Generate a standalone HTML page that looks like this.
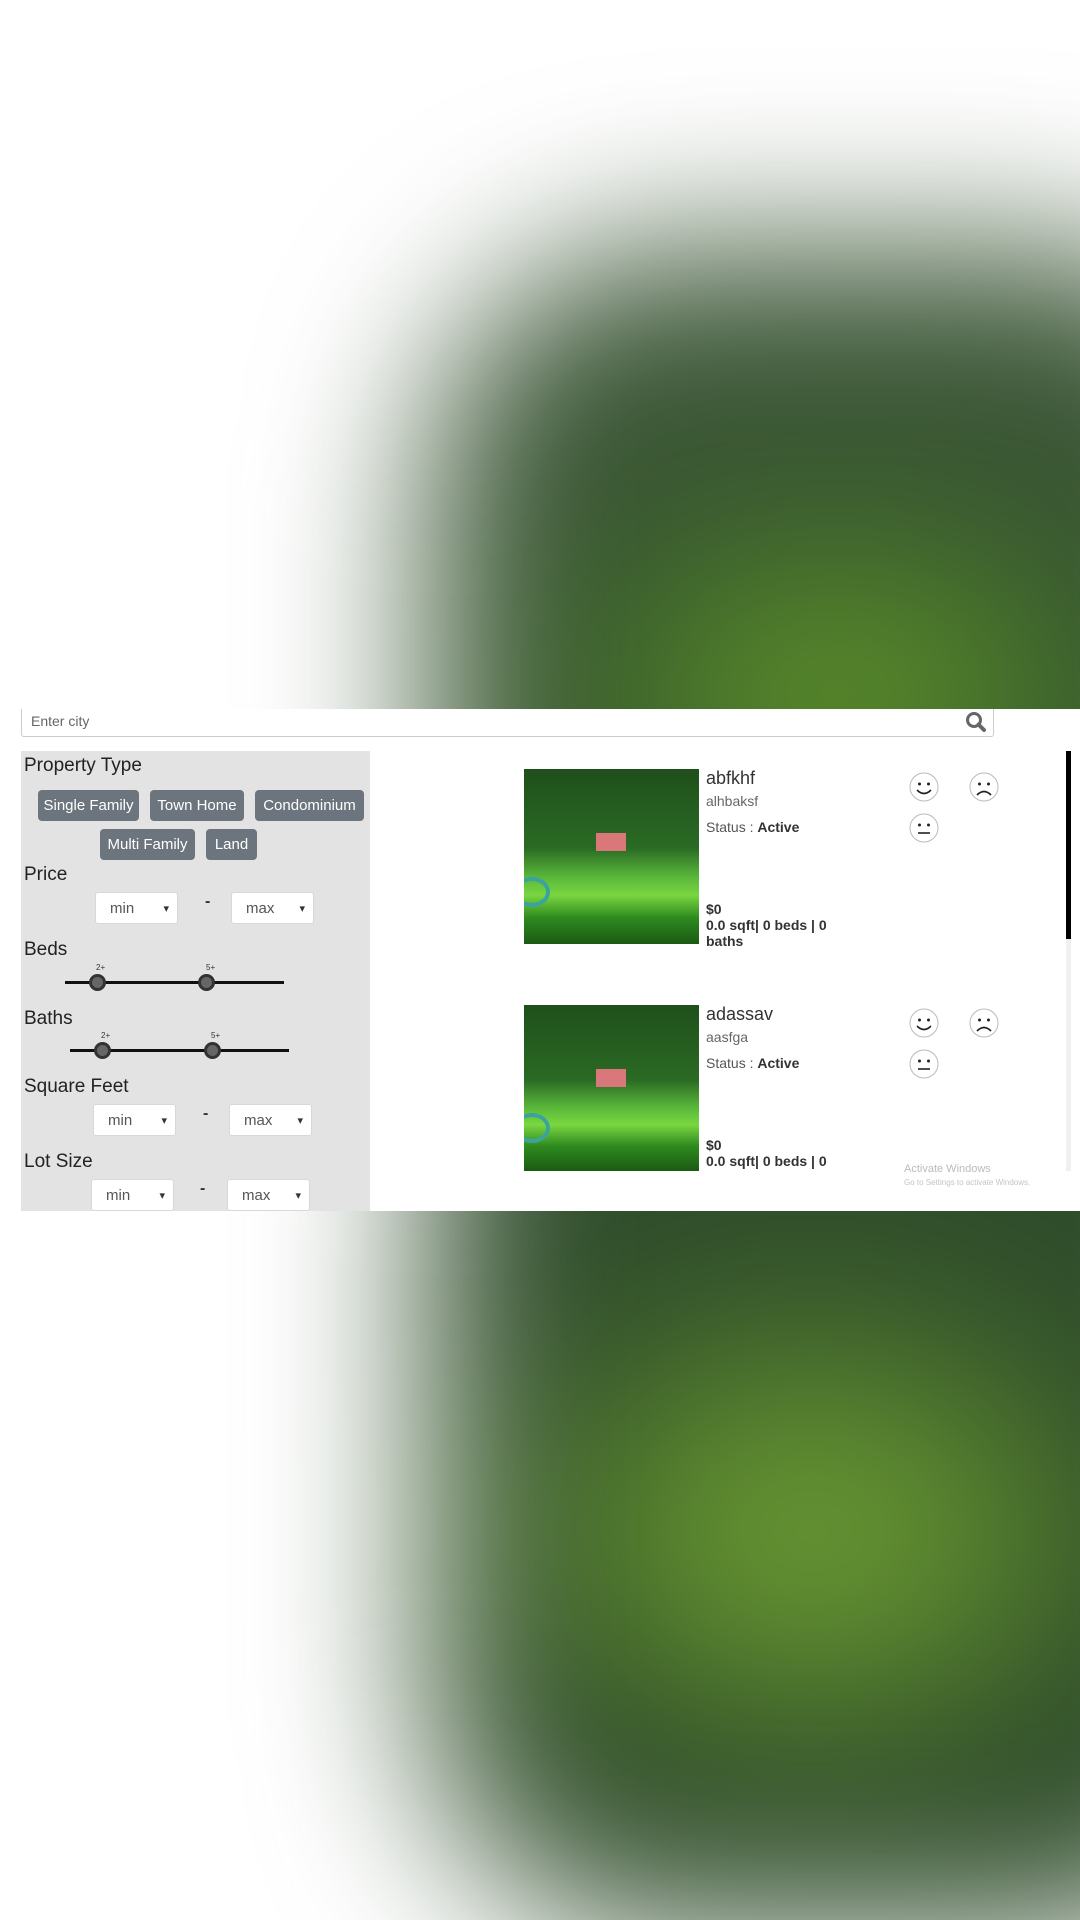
<!DOCTYPE html>
<html><head><meta charset="utf-8"><style>
*{box-sizing:border-box;margin:0;padding:0}
body{width:1080px;height:1920px;position:relative;background:#fff;font-family:"Liberation Sans",sans-serif;overflow:hidden;color:#333}
.sec{position:absolute;left:0;width:1080px;overflow:hidden;background:#fff}
.blob{position:absolute;filter:blur(85px);border-radius:240px}
.abs{position:absolute}
.lbl{position:absolute;left:24px;font-size:19px;color:#222}
.btn{position:absolute;background:#6c757d;color:#fff;font-size:15px;border-radius:4px;text-align:center;line-height:31px;height:31px}
.sel{position:absolute;background:#fff;border:1px solid #d8d8d8;border-radius:3px;height:32px;font-size:15px;color:#555;line-height:32px;padding-left:14px}
.sel:after{content:"▾";position:absolute;right:8px;top:0;font-size:11px;color:#333}
.dash{position:absolute;font-size:16px;color:#333;font-weight:bold}
.track{position:absolute;height:3px;background:#111}
.thumb{position:absolute;width:17px;height:17px;border-radius:50%;background:#666;border:3px solid #333}
.tl{position:absolute;font-size:8px;color:#333}
.card-t{position:absolute;left:706px;font-size:18px;color:#333}
.sub{position:absolute;left:706px;font-size:14px;color:#666}
.st{position:absolute;left:706px;font-size:14px;color:#555}
.b{position:absolute;left:706px;font-size:14px;font-weight:bold;color:#333}
.img{position:absolute;left:524px;width:175px;overflow:hidden;background:linear-gradient(180deg,#1f4f1b 0%,#2a6a24 45%,#5ab83a 62%,#7ad640 72%,#2e8a1f 85%,#1b5a14 100%)}
</style></head><body>

<div class="sec" style="top:0;height:709px">
  <div class="blob" style="left:430px;top:250px;width:850px;height:850px;background:radial-gradient(ellipse 380px 230px at 48% 52%,#6a9c2a 0%,#4c7c2a 45%,#34552c 80%,#3a5535 100%)"></div>
</div>

<div class="sec" style="top:1211px;height:709px">
  <div class="blob" style="left:430px;top:-280px;width:850px;height:1000px;background:radial-gradient(ellipse 380px 280px at 45% 60%,#74a63a 0%,#5a852c 45%,#35562c 85%,#2f4c2b 100%)"></div>
</div>

<div class="sec" style="top:709px;height:502px">
  <div class="abs" style="left:21px;top:0;width:973px;height:28px;border:1px solid #ccc;border-top:none;border-radius:0 0 3px 3px"></div>
  <div class="abs" style="left:31px;top:4px;font-size:14px;color:#666">Enter city</div>
  <svg class="abs" style="left:965px;top:2px" width="22" height="22" viewBox="0 0 22 22"><circle cx="9" cy="9" r="6.5" fill="none" stroke="#666" stroke-width="3"/><line x1="13.5" y1="13.5" x2="19" y2="19" stroke="#666" stroke-width="4" stroke-linecap="round"/></svg>

  <div class="abs" style="left:21px;top:42px;width:349px;height:460px;background:#e3e3e3"></div>
  <div class="lbl" style="top:46px">Property Type</div>
  <div class="btn" style="left:38px;top:81px;width:101px">Single Family</div>
  <div class="btn" style="left:150px;top:81px;width:94px">Town Home</div>
  <div class="btn" style="left:255px;top:81px;width:109px">Condominium</div>
  <div class="btn" style="left:100px;top:120px;width:95px">Multi Family</div>
  <div class="btn" style="left:206px;top:120px;width:51px">Land</div>

  <div class="lbl" style="top:155px">Price</div>
  <div class="sel" style="left:95px;top:183px;width:83px">min</div>
  <div class="dash" style="left:205px;top:184px">-</div>
  <div class="sel" style="left:231px;top:183px;width:83px">max</div>

  <div class="lbl" style="top:230px">Beds</div>
  <div class="tl" style="left:96px;top:254px">2+</div>
  <div class="tl" style="left:206px;top:254px">5+</div>
  <div class="track" style="left:65px;top:272px;width:219px"></div>
  <div class="thumb" style="left:89px;top:265px"></div>
  <div class="thumb" style="left:198px;top:265px"></div>

  <div class="lbl" style="top:299px">Baths</div>
  <div class="tl" style="left:101px;top:322px">2+</div>
  <div class="tl" style="left:211px;top:322px">5+</div>
  <div class="track" style="left:70px;top:340px;width:219px"></div>
  <div class="thumb" style="left:94px;top:333px"></div>
  <div class="thumb" style="left:204px;top:333px"></div>

  <div class="lbl" style="top:367px">Square Feet</div>
  <div class="sel" style="left:93px;top:395px;width:83px">min</div>
  <div class="dash" style="left:203px;top:396px">-</div>
  <div class="sel" style="left:229px;top:395px;width:83px">max</div>

  <div class="lbl" style="top:442px">Lot Size</div>
  <div class="sel" style="left:91px;top:470px;width:83px;height:32px">min</div>
  <div class="dash" style="left:200px;top:471px">-</div>
  <div class="sel" style="left:227px;top:470px;width:83px">max</div>

  <!-- card 1 -->
  <div class="img" style="top:60px;height:175px">
    <div class="abs" style="left:72px;top:64px;width:30px;height:18px;background:#d9777a"></div>
    <div class="abs" style="left:-10px;top:108px;width:36px;height:30px;border:4px solid #3aa3a0;border-radius:50%"></div>
  </div>
  <div class="card-t" style="top:59px">abfkhf</div>
  <div class="sub" style="top:84px">alhbaksf</div>
  <div class="st" style="top:110px">Status : <b style="color:#333">Active</b></div>
  <div class="b" style="top:192px">$0</div>
  <div class="b" style="top:208px">0.0 sqft| 0 beds | 0</div>
  <div class="b" style="top:224px">baths</div>

  <!-- card 2 -->
  <div class="img" style="top:296px;height:166px">
    <div class="abs" style="left:72px;top:64px;width:30px;height:18px;background:#d9777a"></div>
    <div class="abs" style="left:-10px;top:108px;width:36px;height:30px;border:4px solid #3aa3a0;border-radius:50%"></div>
  </div>
  <div class="card-t" style="top:295px">adassav</div>
  <div class="sub" style="top:320px">aasfga</div>
  <div class="st" style="top:346px">Status : <b style="color:#333">Active</b></div>
  <div class="b" style="top:428px">$0</div>
  <div class="b" style="top:444px">0.0 sqft| 0 beds | 0</div>

  <svg class="abs" style="left:0;top:0" width="1080" height="502">
    <defs>
      <g id="face"><circle r="14" fill="#fff" stroke="#bbb" stroke-width="1"/><circle cx="-4.5" cy="-3" r="1.5" fill="#222"/><circle cx="4.5" cy="-3" r="1.5" fill="#222"/></g>
    </defs>
    <g transform="translate(924,78)"><use href="#face"/><path d="M-7 3 Q0 10 7 3" fill="none" stroke="#222" stroke-width="1.6"/></g>
    <g transform="translate(984,78)"><use href="#face"/><path d="M-7 8 Q0 1 7 8" fill="none" stroke="#222" stroke-width="1.6"/></g>
    <g transform="translate(924,119)"><use href="#face"/><line x1="-6" y1="5" x2="6" y2="5" stroke="#222" stroke-width="1.6"/></g>
    <g transform="translate(924,314)"><use href="#face"/><path d="M-7 3 Q0 10 7 3" fill="none" stroke="#222" stroke-width="1.6"/></g>
    <g transform="translate(984,314)"><use href="#face"/><path d="M-7 8 Q0 1 7 8" fill="none" stroke="#222" stroke-width="1.6"/></g>
    <g transform="translate(924,355)"><use href="#face"/><line x1="-6" y1="5" x2="6" y2="5" stroke="#222" stroke-width="1.6"/></g>
  </svg>

  <div class="abs" style="left:1066px;top:42px;width:5px;height:420px;background:#f0f0f0"></div>
  <div class="abs" style="left:1066px;top:42px;width:5px;height:188px;background:#000"></div>

  <div class="abs" style="left:904px;top:454px;font-size:11px;color:#bbb">Activate Windows</div>
  <div class="abs" style="left:904px;top:469px;font-size:8px;color:#c4c4c4">Go to Settings to activate Windows.</div>
</div>
</body></html>
